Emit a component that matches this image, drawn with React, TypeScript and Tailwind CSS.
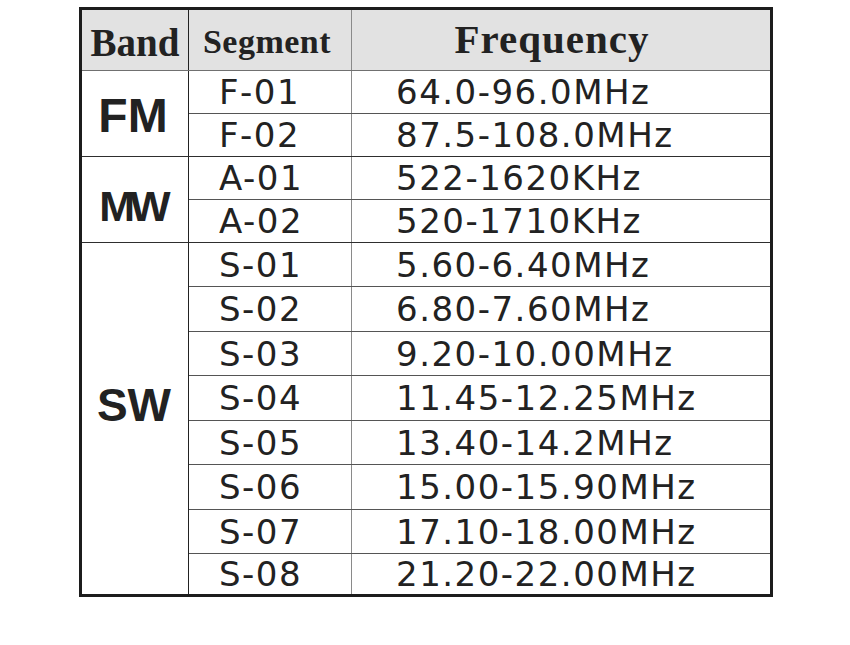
import React from "react";

type Row = { seg: string; freq: string; h: string };
type Group = { band: string; bandCls: string; rows: Row[]; last?: boolean };

const groups: Group[] = [
  {
    band: "FM",
    bandCls: "text-[48px] pt-[5px] pr-[4px]",
    rows: [
      { seg: "F-01", freq: "64.0-96.0MHz", h: "h-[43px]" },
      { seg: "F-02", freq: "87.5-108.0MHz", h: "h-[42px]" },
    ],
  },
  {
    band: "MW",
    bandCls: "text-[43px] tracking-[-5px] pt-[14px] pr-[5px]",
    rows: [
      { seg: "A-01", freq: "522-1620KHz", h: "h-[43px]" },
      { seg: "A-02", freq: "520-1710KHz", h: "h-[42px]" },
    ],
  },
  {
    band: "SW",
    bandCls: "text-[46px] pb-[28px] pr-[2px]",
    last: true,
    rows: [
      { seg: "S-01", freq: "5.60-6.40MHz", h: "h-[44px]" },
      { seg: "S-02", freq: "6.80-7.60MHz", h: "h-[45px]" },
      { seg: "S-03", freq: "9.20-10.00MHz", h: "h-[44px]" },
      { seg: "S-04", freq: "11.45-12.25MHz", h: "h-[45px]" },
      { seg: "S-05", freq: "13.40-14.2MHz", h: "h-[44px]" },
      { seg: "S-06", freq: "15.00-15.90MHz", h: "h-[45px]" },
      { seg: "S-07", freq: "17.10-18.00MHz", h: "h-[44px]" },
      { seg: "S-08", freq: "21.20-22.00MHz", h: "h-[40px]" },
    ],
  },
];

const body = { fontFamily: '"DejaVu Sans", "Noto Sans", sans-serif' };
const serif = { fontFamily: '"Liberation Serif", serif' };
const arial = { fontFamily: '"Liberation Sans", Arial, sans-serif' };

export default function App() {
  return (
    <div className="w-[850px] h-[645px] bg-white pt-[7px] pl-[79px]">
      <div className="w-[694px] border-[3px] border-[#1c1c1c] text-[#222] bg-white">
        {/* header */}
        <div className="flex h-[61px] bg-[#e2e2e2] border-b border-[#707070]">
          <div
            className="w-[107px] border-r border-[#222] flex items-center justify-center font-bold text-[39px] leading-none pt-[4px]"
            style={serif}
          >
            Band
          </div>
          <div
            className="w-[163px] border-r border-[#8a8a8a] flex items-center justify-center font-bold text-[34px] leading-none tracking-[0.5px] pt-[4px] pr-[6px]"
            style={serif}
          >
            Segment
          </div>
          <div
            className="flex-1 flex items-center justify-center font-bold text-[41px] leading-none tracking-[1px] pb-[2px] pr-[18px]"
            style={serif}
          >
            Frequency
          </div>
        </div>
        {groups.map((g) => (
          <div
            key={g.band}
            className={g.last ? "flex" : "flex border-b border-[#2e2e2e]"}
          >
            <div
              className={
                "w-[107px] border-r border-[#222] flex items-center justify-center font-bold leading-none " +
                g.bandCls
              }
              style={arial}
            >
              {g.band}
            </div>
            <div className="flex-1 flex flex-col">
              {g.rows.map((r, i) => (
                <div
                  key={r.seg}
                  className={
                    (i < g.rows.length - 1 ? "border-b border-[#555] " : "") +
                    "flex " +
                    r.h
                  }
                >
                  <div
                    className="w-[163px] border-r border-[#8a8a8a] flex items-center pl-[30px] text-[34px] leading-none tracking-[1.5px]"
                    style={body}
                  >
                    {r.seg}
                  </div>
                  <div
                    className="flex-1 flex items-center pl-[44px] text-[34px] leading-none tracking-[1.5px]"
                    style={body}
                  >
                    {r.freq}
                  </div>
                </div>
              ))}
            </div>
          </div>
        ))}
      </div>
    </div>
  );
}
